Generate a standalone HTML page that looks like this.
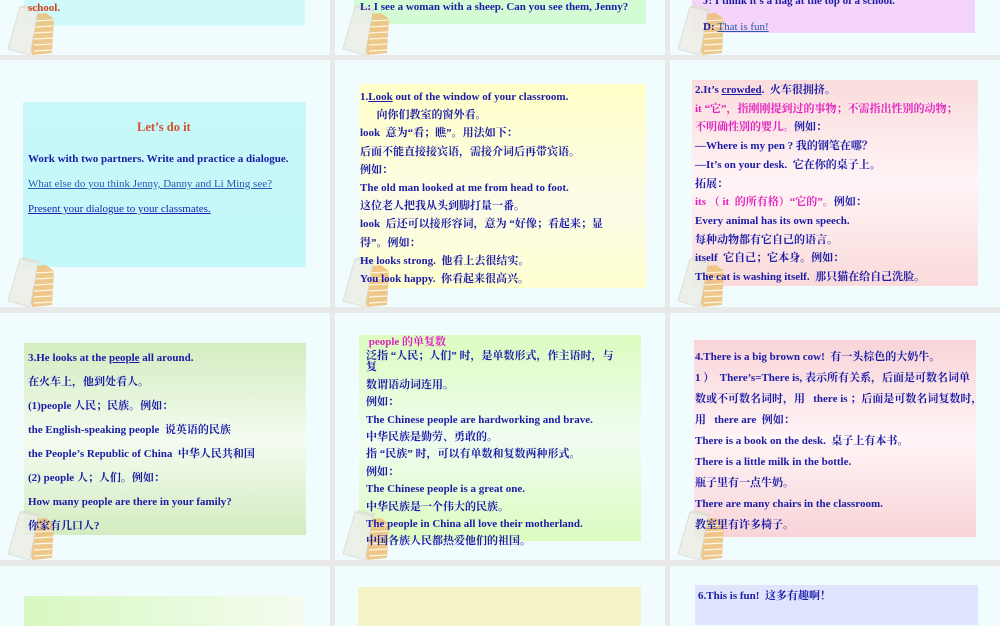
<!DOCTYPE html>
<html><head><meta charset="utf-8"><style>
*{margin:0;padding:0;box-sizing:border-box}
body{width:1000px;height:600px;overflow:hidden;background:#e9e9e9;position:relative;font-family:"Liberation Serif","Noto Serif CJK SC","Noto Sans CJK SC",serif;font-weight:bold;color:#1c1ca8;font-size:11px}
.s{position:absolute;background:#f0fcfd;overflow:hidden}
.s>div{z-index:2}
.s>div.b{z-index:0}
.b{position:absolute;overflow:hidden}
.l{position:absolute;white-space:nowrap}
.bk{position:absolute;left:2px;bottom:0;width:56px;height:52px;z-index:1;opacity:.85}
.m{color:#e020c0}
u{text-decoration:underline}
.lk{color:#2a5ab0;font-weight:normal;text-decoration:underline}
</style></head><body>
<svg width="0" height="0" style="position:absolute"><defs><g id="book">
<polygon points="22,12 44,10 52,16 50,50 30,52" fill="#eec078"/>
<g stroke="#fff6e0" stroke-width="1.2"><line x1="32" y1="18" x2="52" y2="17"/><line x1="32" y1="24" x2="51" y2="23"/><line x1="32" y1="30" x2="51" y2="29"/><line x1="32" y1="36" x2="51" y2="35"/><line x1="32" y1="42" x2="50" y2="41"/><line x1="32" y1="48" x2="50" y2="47"/></g>
<polygon points="6,46 18,4 36,8 28,52" fill="#eceee6" stroke="#d4d4cc" stroke-width="0.8"/>
<polygon points="18,4 22,2 40,6 36,8" fill="#e0e0d4"/>
</g></defs></svg>

<!-- Row 0 -->
<div class="s" style="left:0;top:0;width:330px;height:55px">
<div class="b" style="left:24px;top:0;width:281px;height:26px;background:#d0fafa"></div>
<div class="l" style="left:28px;top:2px;color:#d04020">school.</div>
<svg class="bk" viewBox="0 0 56 52"><use href="#book"/></svg></div>
<div class="s" style="left:335px;top:0;width:330px;height:55px">
<div class="b" style="left:19px;top:0;width:292px;height:24px;background:#d4fcd4"></div>
<div class="l" style="left:25px;top:1px">L: I see a woman with a sheep. Can you see them, Jenny?</div>
<svg class="bk" viewBox="0 0 56 52"><use href="#book"/></svg></div>
<div class="s" style="left:670px;top:0;width:330px;height:55px">
<div class="b" style="left:22px;top:0;width:283px;height:33px;background:#f4d4f8"></div>
<div class="l" style="left:33px;top:-5px">J: I think it's a flag at the top of a school.</div>
<div class="l" style="left:33px;top:21px">D: <span class="lk">That is fun!</span></div>
<svg class="bk" viewBox="0 0 56 52"><use href="#book"/></svg></div>

<!-- Row 1 -->
<div class="s" style="left:0;top:60px;width:330px;height:247px">
<div class="b" style="left:23px;top:42px;width:283px;height:165px;background:linear-gradient(#c8f8f8,#c4f8fa)"></div>
<div class="l" style="left:137px;top:60px;color:#d05030;font-size:12.5px">Let’s do it</div>
<div class="l" style="left:28px;top:93px">Work with two partners. Write and practice a dialogue.</div>
<div class="l" style="left:28px;top:118px;color:#2a5ab0;font-weight:normal;text-decoration:underline">What else do you think Jenny, Danny and Li Ming see? </div>
<div class="l" style="left:28px;top:143px;color:#2020b0;font-weight:normal;text-decoration:underline">Present your dialogue to your classmates.</div>
<svg class="bk" viewBox="0 0 56 52"><use href="#book"/></svg></div>

<div class="s" style="left:335px;top:60px;width:330px;height:247px">
<div class="b" style="left:24px;top:24px;width:287px;height:204px;background:linear-gradient(#ffffc8,#fcfce8 60%,#ffffd0)"></div>
<div style="position:absolute;left:25px;top:28px;line-height:18.2px">
1.<u>Look</u> out of the window of your classroom.<br>
&nbsp; &nbsp; &nbsp; 向你们教室的窗外看。<br>
look&nbsp; 意为“看；瞧”。用法如下：<br>
后面不能直接接宾语，需接介词后再带宾语。<br>
例如：<br>
The old man looked at me from head to foot.<br>
这位老人把我从头到脚打量一番。<br>
look&nbsp; 后还可以接形容词，意为 “好像；看起来；显<br>
得”。例如：<br>
He looks strong.&nbsp; 他看上去很结实。<br>
You look happy.&nbsp; 你看起来很高兴。</div>
<svg class="bk" viewBox="0 0 56 52"><use href="#book"/></svg></div>

<div class="s" style="left:670px;top:60px;width:330px;height:247px">
<div class="b" style="left:22px;top:20px;width:286px;height:206px;background:linear-gradient(#fadcdc,#fff4f6 50%,#fadada)"></div>
<div style="position:absolute;left:25px;top:21px;line-height:18.7px">
2.It’s <u>crowded</u>.&nbsp; 火车很拥挤。<br>
<span class="m">it “它”，指刚刚提到过的事物；不需指出性别的动物；</span><br>
<span class="m">不明确性别的婴儿。</span>例如：<br>
—Where is my pen ? 我的钢笔在哪？<br>
—It’s on your desk.&nbsp; 它在你的桌子上。<br>
拓展：<br>
<span class="m">its （ it&nbsp; 的所有格）“它的”。</span>例如：<br>
Every animal has its own speech.<br>
每种动物都有它自己的语言。<br>
itself&nbsp; 它自己；它本身。例如：<br>
The cat is washing itself.&nbsp; 那只猫在给自己洗脸。</div>
<svg class="bk" viewBox="0 0 56 52"><use href="#book"/></svg></div>

<!-- Row 2 -->
<div class="s" style="left:0;top:313px;width:330px;height:247px">
<div class="b" style="left:24px;top:30px;width:282px;height:192px;background:linear-gradient(#d4ecc0,#f4fcf0 50%,#d4ecc0)"></div>
<div style="position:absolute;left:28px;top:33px;line-height:24px">
3.He looks at the <u>people</u> all around.<br>
在火车上，他到处看人。<br>
(1)people 人民；民族。例如：<br>
the English-speaking people&nbsp; 说英语的民族<br>
the People’s Republic of China&nbsp; 中华人民共和国<br>
(2) people 人；人们。例如：<br>
How many people are there in your family?<br>
你家有几口人?</div>
<svg class="bk" viewBox="0 0 56 52"><use href="#book"/></svg></div>

<div class="s" style="left:335px;top:313px;width:330px;height:247px">
<div class="b" style="left:24px;top:22px;width:282px;height:206px;background:linear-gradient(#dcfcc0,#f0fcf0 50%,#dcfcc0)"></div>
<div style="position:absolute;left:31px;top:21px;line-height:17.4px">
<span class="m">&nbsp;people 的单复数</span><br>
<span style="line-height:11px;display:inline-block">泛指 “人民；人们” 时，是单数形式，作主语时，与<br>复</span><br>
数谓语动词连用。<br>
例如：<br>
The Chinese people are hardworking and brave.<br>
中华民族是勤劳、勇敢的。<br>
指 “民族” 时，可以有单数和复数两种形式。<br>
例如：<br>
The Chinese people is a great one.<br>
中华民族是一个伟大的民族。<br>
The people in China all love their motherland.<br>
中国各族人民都热爱他们的祖国。</div>
<svg class="bk" viewBox="0 0 56 52"><use href="#book"/></svg></div>

<div class="s" style="left:670px;top:313px;width:330px;height:247px">
<div class="b" style="left:24px;top:27px;width:282px;height:197px;background:linear-gradient(#f8d4d8,#fff4f6 50%,#f8d4d8)"></div>
<div style="position:absolute;left:25px;top:34px;line-height:21px">
4.There is a big brown cow!&nbsp; 有一头棕色的大奶牛。<br>
1 ）&nbsp; There’s=There is, 表示所有关系，后面是可数名词单<br>
数或不可数名词时，用&nbsp; &nbsp;there is ；后面是可数名词复数时，<br>
用&nbsp; &nbsp;there are&nbsp; 例如：<br>
There is a book on the desk.&nbsp; 桌子上有本书。<br>
There is a little milk in the bottle.<br>
瓶子里有一点牛奶。<br>
There are many chairs in the classroom.<br>
教室里有许多椅子。</div>
<svg class="bk" viewBox="0 0 56 52"><use href="#book"/></svg></div>

<!-- Row 3 -->
<div class="s" style="left:0;top:566px;width:330px;height:60px">
<div class="b" style="left:24px;top:30px;width:281px;height:40px;background:linear-gradient(90deg,#d8f8c0,#f4fcf0)"></div></div>
<div class="s" style="left:335px;top:566px;width:330px;height:60px">
<div class="b" style="left:23px;top:21px;width:283px;height:40px;background:#f4f4c8"></div></div>
<div class="s" style="left:670px;top:566px;width:330px;height:60px">
<div class="b" style="left:25px;top:19px;width:283px;height:40px;background:#e0e4fc"></div>
<div class="l" style="left:28px;top:21px">6.This is fun!&nbsp; 这多有趣啊！</div></div>
</body></html>
